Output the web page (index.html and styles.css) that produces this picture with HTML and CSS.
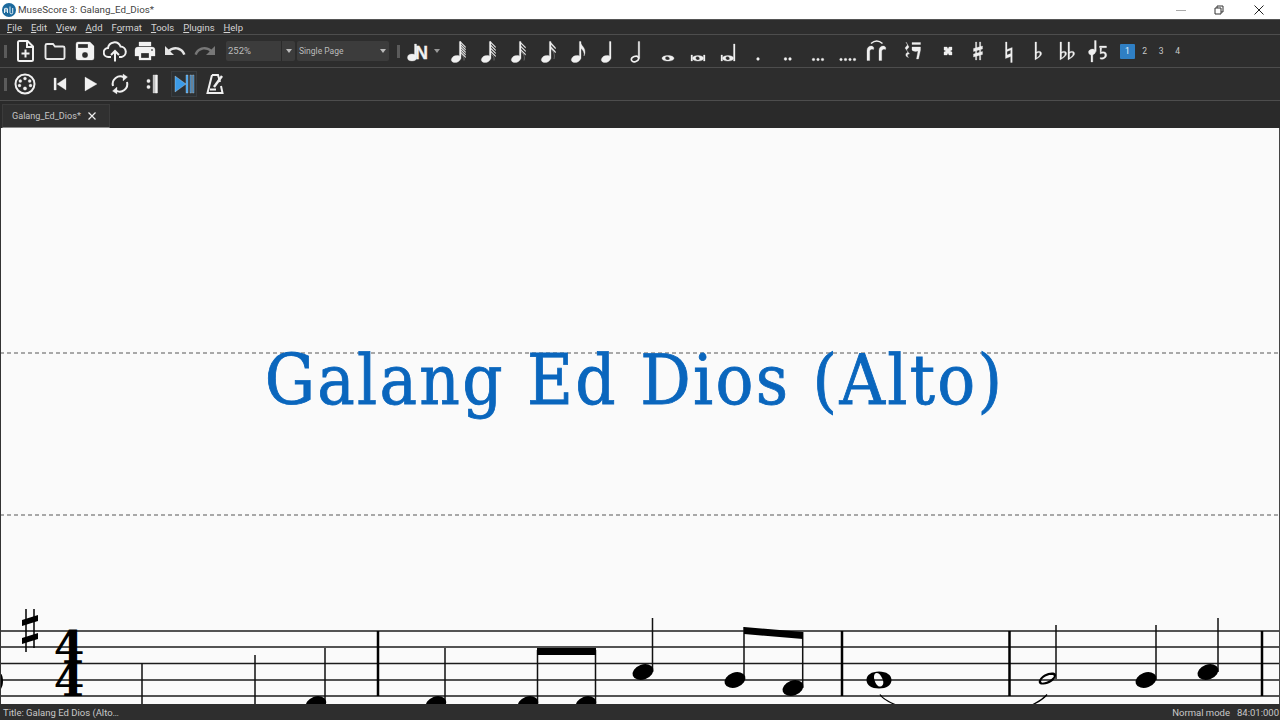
FILE: index.html
```html
<!DOCTYPE html>
<html lang="en">
<head>
    <meta charset="UTF-8">
    <meta name="viewport" content="width=device-width, initial-scale=1.0">
    <title>MuseScore 3: Galang_Ed_Dios*</title>
    <link rel="stylesheet" href="styles.css">
</head>
<body>
    <!-- Icon sprite -->
    <svg class="sprite" xmlns="http://www.w3.org/2000/svg">
        <symbol id="i-new" viewBox="0 0 24 24"><path d="M5 3.500a1.500 1.500 0 0 1 1.500-1.500h8l5.500 5.500v13a1.500 1.500 0 0 1-1.500 1.500h-12a1.500 1.500 0 0 1-1.500-1.500z M14 2v6h6 M12.500 10.500v8 M8.500 14.500h8" fill="none" stroke="#f0f0f0" stroke-width="2"/></symbol>
        <symbol id="i-open" viewBox="0 0 24 24"><path d="M4 5h6l2 2.500h8a1.500 1.500 0 0 1 1.500 1.500v9.500a1.500 1.500 0 0 1-1.500 1.500h-16a1.500 1.500 0 0 1-1.500-1.500v-12a1.500 1.500 0 0 1 1.500-1.500z" fill="none" stroke="#e8e8e8" stroke-width="1.900"/></symbol>
        <symbol id="i-save" viewBox="0 0 24 24"><path d="M17 3H5a2 2 0 0 0-2 2v14a2 2 0 0 0 2 2h14a2 2 0 0 0 2-2V7l-4-4zm-5 16a3 3 0 1 1 0-6 3 3 0 0 1 0 6zm3-10H5V5h10v4z" fill="#f2f2f2"/></symbol>
        <symbol id="i-cloud" viewBox="0 0 24 24"><path d="M8 18h-2.500a4.500 4.500 0 0 1-.5-9 a6.500 6.500 0 0 1 12.500-1.500 a5.300 5.300 0 0 1 1 10.500h-2.500 M12 22.500v-10.500 M8 16l4-4 4 4" fill="none" stroke="#f0f0f0" stroke-width="2"/></symbol>
        <symbol id="i-print" viewBox="0 0 24 24"><path d="M19 8H5a3 3 0 0 0-3 3v6h4v4h12v-4h4v-6a3 3 0 0 0-3-3zm-3 11H8v-5h8v5zm3-7a1 1 0 1 1 0-2 1 1 0 0 1 0 2zm-1-9H6v4h12V3z" fill="#f2f2f2"/></symbol>
        <symbol id="i-undo" viewBox="0 0 24 24"><path d="M12.500 8c-2.650 0-5.050 1-6.900 2.600L2 7v9h9l-3.620-3.620c1.390-1.160 3.160-1.880 5.120-1.880 3.540 0 6.550 2.310 7.600 5.500l2.370-.78C21.080 11.030 17.150 8 12.500 8z"/></symbol>
        <symbol id="i-midi" viewBox="0 0 24 24"><circle cx="12" cy="12" r="9.500" fill="none" stroke="#f0f0f0" stroke-width="2"/><g fill="#f0f0f0"><circle cx="12" cy="6.500" r="1.500"/><circle cx="7.300" cy="9" r="1.500"/><circle cx="16.700" cy="9" r="1.500"/><circle cx="6.500" cy="13.500" r="1.500"/><circle cx="17.500" cy="13.500" r="1.500"/><circle cx="12" cy="16.500" r="1.700"/></g></symbol>
        <symbol id="i-start" viewBox="0 0 24 24"><path d="M6 6h2.200v12H6z M18 6v12l-9-6z" fill="#f0f0f0"/></symbol>
        <symbol id="i-play" viewBox="0 0 24 24"><path d="M7 5v14l12-7z" fill="#f2f2f2"/></symbol>
        <symbol id="i-loop" viewBox="0 0 24 24"><path d="M5 14a7.500 7.500 0 0 1 11-8.500 M19 10a7.500 7.500 0 0 1-11 8.500" fill="none" stroke="#f0f0f0" stroke-width="2"/><path d="M15 2v7l4.500-4z M9 22v-7l-4.500 4z" fill="#f0f0f0"/></symbol>
        <symbol id="i-repeat" viewBox="0 0 24 24"><path d="M14 3h4v18h-4z" fill="#bdbdbd"/><path d="M16.500 3h2v18h-2z" fill="#f4f4f4"/><circle cx="9.500" cy="9" r="1.700" fill="#f0f0f0"/><circle cx="9.500" cy="15" r="1.700" fill="#f0f0f0"/></symbol>
        <symbol id="i-pan" viewBox="0 0 24 24"><path d="M3 4v16l11-8z" fill="#3b9be8"/><path d="M14 3h2v18h-2z" fill="#3b9be8"/><path d="M18 3h1.500v18h-1.500z M20.500 3h1.500v18h-1.500z" fill="#2f78b4"/></symbol>
        <symbol id="i-metro" viewBox="0 0 24 24"><path d="M9 3h6l2 7 M18 14l1.500 7h-15l4.500-18 M7 17.500h6" fill="none" stroke="#f0f0f0" stroke-width="2"/><path d="M11 15l8-11" stroke="#f0f0f0" stroke-width="2.400"/></symbol>

        <symbol id="n-head" viewBox="0 0 24 24"><ellipse cx="10" cy="20" rx="4.800" ry="3.400" transform="rotate(-20 10 20)"/><path d="M13.400 2.500h1.600v17h-1.600z"/></symbol>
        <symbol id="n-128" viewBox="0 0 24 24"><use href="#n-head"/><path d="M14.500 2.500l5 5v1.200l-5-5z M14.500 5l5 5v1.200l-5-5z M14.500 7.500l5 5v1.200l-5-5z M14.500 10l5 5v1.200l-5-5z M14.500 12.500l5 5v1.200l-5-5z"/><path d="M15 15.500c2.500 1.500 3.500 3.500 3 6" fill="none" stroke="#f0f0f0"/></symbol>
        <symbol id="n-64" viewBox="0 0 24 24"><use href="#n-head"/><path d="M14.500 2.500l5 5v1.200l-5-5z M14.500 5.500l5 5v1.200l-5-5z M14.500 8.500l5 5v1.200l-5-5z M14.500 11.500l5 5v1.200l-5-5z"/><path d="M15 15c2.500 1.500 3.500 3.500 3 6.500" fill="none" stroke="#f0f0f0"/></symbol>
        <symbol id="n-32" viewBox="0 0 24 24"><use href="#n-head"/><path d="M14.500 3l5 5v1.200l-5-5z M14.500 6.500l5 5v1.200l-5-5z M14.500 10l5 5v1.200l-5-5z"/><path d="M15 13c3 2 4 5 3 8.500" fill="none" stroke="#f0f0f0"/></symbol>
        <symbol id="n-16" viewBox="0 0 24 24"><use href="#n-head"/><path d="M14.500 3l5 5.500v1.500l-5-5z M14.500 7l5 5.500v1.500l-5-5z"/><path d="M15 10c3 3 4 6 3 10" fill="none" stroke="#f0f0f0"/></symbol>
        <symbol id="n-8" viewBox="0 0 24 24"><use href="#n-head"/><path d="M14.500 3c.5 4 5 5 4.500 11l-1 3c.5-4-1-6-3.500-8z"/></symbol>
        <symbol id="n-half" viewBox="0 0 24 24"><ellipse cx="9" cy="20" rx="3.700" ry="2.600" transform="rotate(-20 9 20)" fill="none" stroke="#f0f0f0" stroke-width="1.600"/><path d="M12.200 2.500h1.500v17h-1.500z"/></symbol>
        <symbol id="n-whole" viewBox="0 0 24 24"><path fill-rule="evenodd" d="M12 16.500c3.600 0 6 1.200 6 2.800s-2.400 2.800-6 2.800-6-1.200-6-2.800 2.400-2.800 6-2.800z M10.500 17.500c-1 .3-1.500 1-1.300 1.900s1.500 1.900 3 1.600 1.700-1.200 1.400-2.100-2-1.700-3.100-1.400z"/></symbol>
        <symbol id="n-breve" viewBox="0 0 24 24"><path d="M5 16h1.500v6h-1.500z M17.500 16h1.500v6h-1.500z"/><path fill-rule="evenodd" d="M12 16.500c3 0 5.500 1 5.500 2.800s-2.500 2.800-5.500 2.800-5.500-1-5.500-2.800 2.500-2.800 5.500-2.800z M11 17.500c-1 .3-1.500 1-1.300 1.900s1.500 1.900 2.600 1.600 1.600-1.200 1.300-2.100-1.600-1.700-2.600-1.400z"/></symbol>
        <symbol id="n-long" viewBox="0 0 24 24"><path d="M5 16h1.500v6h-1.500z M17.500 5h1.500v17h-1.500z"/><path fill-rule="evenodd" d="M12 16.500c3 0 5.500 1 5.500 2.800s-2.500 2.800-5.500 2.800-5.500-1-5.500-2.800 2.500-2.800 5.500-2.800z M11 17.500c-1 .3-1.500 1-1.300 1.900s1.500 1.900 2.600 1.600 1.600-1.200 1.300-2.100-1.600-1.700-2.600-1.400z"/></symbol>
        <symbol id="n-d1" viewBox="0 0 24 24"><circle cx="12" cy="20" r="1.400"/></symbol>
        <symbol id="n-d2" viewBox="0 0 24 24"><circle cx="9.500" cy="20" r="1.400"/><circle cx="14" cy="20" r="1.400"/></symbol>
        <symbol id="n-d3" viewBox="0 0 24 24"><circle cx="7.500" cy="20.500" r="1.300"/><circle cx="12" cy="20.500" r="1.300"/><circle cx="16.500" cy="20.500" r="1.300"/></symbol>
        <symbol id="n-d4" viewBox="0 0 24 24"><circle cx="5" cy="20.500" r="1.300"/><circle cx="9.500" cy="20.500" r="1.300"/><circle cx="14" cy="20.500" r="1.300"/><circle cx="18.500" cy="20.500" r="1.300"/></symbol>
        <symbol id="n-tie" viewBox="0 0 24 24"><path d="M1 21.500v-10c0-3 2-4.500 4-4.500s3.500 1.500 2.500 3.500c-1.500-.8-3.500-.3-3.800 1.500v9.500z M13 21.500v-10c0-3 2-4.500 4-4.500s3.500 1.500 2.500 3.500c-1.500-.8-3.500-.3-3.800 1.500v9.500z"/><path d="M5 4.500c3.500-3 8-3 11.500 0" fill="none" stroke="#f0f0f0" stroke-width="1.500"/></symbol>
        <symbol id="n-rest" viewBox="0 0 24 24"><path d="M7 3l3 5-2.500 3 3 4c-2 0-3 1-1 3.500-3.500-1-3.500-4-.5-5.500l-3-4 2.500-3z M13 3.500h8.500v2h-8.500z M13 8h8.500v3l-2 9h-2l1.500-8c-2 .8-5 .5-6-1z"/></symbol>
        <symbol id="n-x" viewBox="0 0 24 24"><path d="M10 8h3l1 2 1-2h3v3l-2 1 2 1v3h-3l-1-2-1 2h-3v-3l2-1-2-1z"/></symbol>
        <symbol id="n-sharp" viewBox="0 0 24 24"><path d="M9.500 3h1.200v18h-1.200z M13.500 3h1.200v18h-1.200z M7.500 9.500l9-2.500v3l-9 2.500z M7.500 15l9-2.500v3l-9 2.500z"/></symbol>
        <symbol id="n-natural" viewBox="0 0 24 24"><path d="M9.500 3h1.500v7.500l5.200-2v15h-1.500v-6l-5.200 2z M11 12.500v3.500l3.700-1.500v-3.500z" fill-rule="evenodd"/></symbol>
        <symbol id="n-flat" viewBox="0 0 24 24"><path fill-rule="evenodd" d="M9 3h1.600v10c1.500-1.200 5-1.200 5 1.500 0 2.500-3.500 4.500-6.600 6.500z M10.600 14.500v4.500c2-1.200 3.300-2.800 3.300-4.300s-2.300-1.400-3.300-.2z"/></symbol>
        <symbol id="n-dflat" viewBox="0 0 24 24"><path fill-rule="evenodd" d="M4 3h1.600v10c1.500-1.200 5-1.200 5 1.500 0 2.500-3.500 4.500-6.600 6.500z M5.600 14.500v4.500c2-1.200 3.300-2.800 3.300-4.300s-2.300-1.400-3.300-.2z M12 3h1.600v10c1.500-1.200 5-1.200 5 1.500 0 2.500-3.500 4.500-6.600 6.500z M13.600 14.500v4.500c2-1.200 3.300-2.800 3.300-4.300s-2.300-1.400-3.300-.2z"/></symbol>
        <symbol id="n-flip" viewBox="0 0 24 24"><ellipse cx="6" cy="13" rx="3.500" ry="2.800" transform="rotate(-20 6 13)"/><path d="M8.500 1.500h1.700v11h-1.700z M5 15h1.800v8h-1.800z M13.500 7h7v1.700h-7z M14 9h1.700l-.5 4c3-1 5.500 0 5.500 3 0 3-3.500 5-6.500 4v-1.500c2.500.7 4.700-.5 4.700-2.500s-2.500-2.300-4.700-1z"/></symbol>
    </svg>

    <div class="app">
        <!-- Window title -->
        <div class="titlebar">
            <svg class="app-logo" viewBox="0 0 14 14"><circle cx="7" cy="7" r="7" fill="#1c6a9e"/><path d="M2.500 10V6c0-1 1.500-1 1.500 0v3 M4 6c0-1 1.500-1 1.500 0v4 M8 3.500v6a1.300 1.300 0 0 0 2.700 0V5" fill="none" stroke="#fff" stroke-width=".9"/></svg>
            <span class="app-name">MuseScore 3: Galang_Ed_Dios*</span>
            <div class="win-btns">
                <svg class="win-btn win-min" viewBox="0 0 12 12"><path d="M1 6.500h10" stroke="#aaa"/></svg>
                <svg class="win-btn" viewBox="0 0 12 12"><path d="M2 4h6v6h-6z M4 4v-2h6v6h-2" fill="none" stroke="#333"/></svg>
                <svg class="win-btn" viewBox="0 0 12 12"><path d="M1.500 1.500l9 9 M10.500 1.500l-9 9" stroke="#222"/></svg>
            </div>
        </div>

        <!-- Menu -->
        <nav class="menubar">
            <span class="menu-item"><u>F</u>ile</span>
            <span class="menu-item"><u>E</u>dit</span>
            <span class="menu-item"><u>V</u>iew</span>
            <span class="menu-item"><u>A</u>dd</span>
            <span class="menu-item">F<u>o</u>rmat</span>
            <span class="menu-item"><u>T</u>ools</span>
            <span class="menu-item"><u>P</u>lugins</span>
            <span class="menu-item"><u>H</u>elp</span>
        </nav>

        <!-- File and note input toolbar -->
        <div class="toolbar">
            <span class="grip"></span>
            <span class="tool"><svg class="ico"><use href="#i-new"/></svg></span>
            <span class="tool"><svg class="ico"><use href="#i-open"/></svg></span>
            <span class="tool"><svg class="ico"><use href="#i-save"/></svg></span>
            <span class="tool"><svg class="ico"><use href="#i-cloud"/></svg></span>
            <span class="tool"><svg class="ico"><use href="#i-print"/></svg></span>
            <span class="tool"><svg class="ico ico-bright"><use href="#i-undo"/></svg></span>
            <span class="tool"><svg class="ico ico-dim ico-flip"><use href="#i-undo"/></svg></span>
            <div class="combo combo-zoom"><span class="combo-val">252%</span><span class="combo-arrow"></span></div>
            <div class="combo combo-view"><span class="combo-val">Single Page</span><span class="combo-arrow"></span></div>
            <span class="grip grip-mid"></span>
            <span class="tool"><svg class="ico ico-n" viewBox="0 0 24 24"><ellipse cx="7" cy="18.500" rx="4.500" ry="3.500"/><path d="M9.500 5h2v13h-2z"/><text x="10" y="19.500" class="n-letter">N</text></svg></span>
            <span class="drop-arrow"></span>
            <span class="tool"><svg class="ico"><use href="#n-128"/></svg></span>
            <span class="tool"><svg class="ico"><use href="#n-64"/></svg></span>
            <span class="tool"><svg class="ico"><use href="#n-32"/></svg></span>
            <span class="tool"><svg class="ico"><use href="#n-16"/></svg></span>
            <span class="tool"><svg class="ico"><use href="#n-8"/></svg></span>
            <span class="tool"><svg class="ico"><use href="#n-head"/></svg></span>
            <span class="tool"><svg class="ico"><use href="#n-half"/></svg></span>
            <span class="tool"><svg class="ico"><use href="#n-whole"/></svg></span>
            <span class="tool"><svg class="ico"><use href="#n-breve"/></svg></span>
            <span class="tool"><svg class="ico"><use href="#n-long"/></svg></span>
            <span class="tool"><svg class="ico"><use href="#n-d1"/></svg></span>
            <span class="tool"><svg class="ico"><use href="#n-d2"/></svg></span>
            <span class="tool"><svg class="ico"><use href="#n-d3"/></svg></span>
            <span class="tool"><svg class="ico"><use href="#n-d4"/></svg></span>
            <span class="tool"><svg class="ico"><use href="#n-tie"/></svg></span>
            <span class="tool tool-wide"><svg class="ico"><use href="#n-rest"/></svg></span>
            <span class="tool tool-wide"><svg class="ico"><use href="#n-x"/></svg></span>
            <span class="tool"><svg class="ico"><use href="#n-sharp"/></svg></span>
            <span class="tool"><svg class="ico"><use href="#n-natural"/></svg></span>
            <span class="tool"><svg class="ico"><use href="#n-flat"/></svg></span>
            <span class="tool"><svg class="ico"><use href="#n-dflat"/></svg></span>
            <span class="tool"><svg class="ico"><use href="#n-flip"/></svg></span>
            <span class="voice voice-on">1</span>
            <span class="voice">2</span>
            <span class="voice">3</span>
            <span class="voice">4</span>
        </div>

        <!-- Playback toolbar -->
        <div class="toolbar">
            <span class="grip"></span>
            <span class="tool"><svg class="ico"><use href="#i-midi"/></svg></span>
            <span class="tool tool-start"><svg class="ico"><use href="#i-start"/></svg></span>
            <span class="tool"><svg class="ico"><use href="#i-play"/></svg></span>
            <span class="tool"><svg class="ico"><use href="#i-loop"/></svg></span>
            <span class="tool tool-repeat"><svg class="ico"><use href="#i-repeat"/></svg></span>
            <span class="tool tool-pan"><svg class="ico"><use href="#i-pan"/></svg></span>
            <span class="tool tool-metro"><svg class="ico"><use href="#i-metro"/></svg></span>
        </div>

        <!-- Tabs -->
        <div class="tabbar">
            <div class="tab">
                <span class="tab-name">Galang_Ed_Dios*</span>
                <svg class="tab-close" viewBox="0 0 10 10"><path d="M1.500 1.500l7 7 M8.500 1.500l-7 7" stroke="#eee" stroke-width="1.200"/></svg>
            </div>
        </div>

        <!-- Score -->
        <main class="score">
            <div class="title-frame">
                <h1 class="score-title">Galang Ed Dios (Alto)</h1>
            </div>
            <svg class="staff" viewBox="0 600 1280 104" xmlns="http://www.w3.org/2000/svg">
                <g class="staff-lines">
                    <path d="M1 631h1278 M1 647h1278 M1 663.500h1278 M1 680h1278 M1 696h1278"/>
                </g>
                <g class="bars">
                    <path d="M378 631v65 M842 631v65 M1009.500 631v65 M1262 631v65"/>
                </g>
                <g class="stems">
                    <path d="M142 663v41 M255 655v49 M325 648v56 M445 648v56 M537.500 650v54 M595.500 650v54 M652.500 618v54 M744 627v53 M802.700 632v56 M1056 625v54 M1156 625v55 M1218 618v54"/>
                </g>
                <path d="M0 672c4 4 4 14 0 18z"/>
                <path d="M26 609v43 M34 609v39" stroke="#000" stroke-width="1.500"/>
                <path d="M22 620l16-5v6l-16 5z M22 638l16-5v6l-16 5z"/>
                <text x="69" y="663" class="time-sig">4</text>
                <text x="69" y="696" class="time-sig">4</text>
                <path d="M537 648h59v7h-59z M744 627l59 5v7l-59-5z"/>
                <ellipse cx="316" cy="704" rx="10.500" ry="7.500" transform="rotate(-20 316 704)"/>
                <ellipse cx="436" cy="704" rx="10.500" ry="7.500" transform="rotate(-20 436 704)"/>
                <ellipse cx="528" cy="704" rx="10.500" ry="7.500" transform="rotate(-20 528 704)"/>
                <ellipse cx="586" cy="704" rx="10.500" ry="7.500" transform="rotate(-20 586 704)"/>
                <ellipse cx="643" cy="672" rx="10.800" ry="7.500" transform="rotate(-20 643 672)"/>
                <ellipse cx="735" cy="680" rx="10.800" ry="7.500" transform="rotate(-20 735 680)"/>
                <ellipse cx="793" cy="688" rx="10.800" ry="7.500" transform="rotate(-20 793 688)"/>
                <ellipse cx="1146" cy="680" rx="10.800" ry="7.500" transform="rotate(-20 1146 680)"/>
                <ellipse cx="1208" cy="672" rx="10.800" ry="7.500" transform="rotate(-20 1208 672)"/>
                <path fill-rule="evenodd" d="M879 671.500c7.500 0 12.500 3.500 12.500 8.500s-5 8.500-12.500 8.500-12.500-3.500-12.500-8.500 5-8.500 12.500-8.500z M876.500 673c-2.500.5-3 3.500-2 7s3 7 6 6.500 3.500-4 2-7.500-3.500-6.500-6-6z"/>
                <path fill-rule="evenodd" d="M1052 672.500c3.500 0 5 2 3.500 4.500-1.500 4-6 7-12 7.500-4 .5-6-2-4-5 2-4 7.500-7 12.500-7z M1051.500 675c-3.500-.5-8 2-10 5-1 2 0 3 2.500 2.500 3.500-.5 7.500-3 9.500-5.500 1-1.500 0-2-2-2z"/>
                <path d="M880 694.500c3 5 9 7.500 15 10 M1047 694.500c-3 4-8 7-14 10" fill="none" stroke="#000" stroke-width="1.300"/>
            </svg>
        </main>

        <!-- Status bar -->
        <footer class="statusbar">
            <span>Title: Galang Ed Dios (Alto…</span>
            <span class="status-right"><span>Normal mode</span><span>84:01:000</span></span>
        </footer>
    </div>
</body>
</html>
```
FILE: styles.css
```css
* {
    box-sizing: border-box;
}
html, body {
    margin: 0;
    height: 100%;
    overflow: hidden;
}
body {
    font-family: Roboto, "Open Sans", sans-serif;
    background-color: #2d2d2d;
    color: #ddd;
}
.sprite {
    display: none;
}
.app {
    display: flex;
    flex-direction: column;
    height: 720px;
}

/* Title bar */
.titlebar {
    display: flex;
    align-items: center;
    height: 19px;
    padding-left: 2px;
    background-color: #fff;
    color: #444;
    font-size: 9.800px;
}
.app-logo {
    width: 14px;
    height: 14px;
}
.app-name {
    margin-left: 2px;
}
.win-btns {
    display: flex;
    margin-left: auto;
    padding-right: 15px;
    gap: 28px;
}
.win-btn {
    width: 12px;
    height: 12px;
}
.win-min {
    margin-right: -2px;
}

/* Menu */
.menubar {
    display: flex;
    align-items: center;
    gap: 9px;
    height: 15px;
    padding-left: 7px;
    font-size: 9.500px;
    color: #d4d4d4;
    border-top: 1px solid #555;
}
.menu-item u {
    text-underline-offset: 1px;
}

/* Toolbars */
.toolbar {
    display: flex;
    align-items: center;
    height: 33px;
    border-top: 1px solid #4d4d4d;
}
.grip {
    width: 10px;
    height: 13px;
    background: radial-gradient(circle, #5c5c5c 0.7px, transparent 1px) center top / 2px 2px repeat;
    background-clip: content-box;
    padding: 0 3.500px;
}
.grip-mid {
    width: 8px;
    margin: 0 0 0 5px;
    padding: 0 2.500px;
}
.tool {
    display: flex;
    align-items: center;
    justify-content: center;
    width: 30px;
    height: 30px;
    flex: none;
}
.tool-wide {
    width: 35px;
}
.ico {
    width: 24px;
    height: 24px;
    fill: #f0f0f0;
    stroke: #f0f0f0;
    stroke-width: 0.300;
}
.ico-bright {
    fill: #e4e4e4;
    stroke: none;
}
.ico-dim {
    fill: #777;
    stroke: none;
}
.ico-flip {
    transform: scaleX(-1);
}
.n-letter {
    font-family: "Liberation Sans", sans-serif;
    font-weight: bold;
    font-size: 18px;
}
.drop-arrow {
    width: 0;
    height: 0;
    margin: 0 3px 0 2px;
    border-left: 3.500px solid transparent;
    border-right: 3.500px solid transparent;
    border-top: 4px solid #999;
}

/* Combo boxes */
.combo {
    display: flex;
    align-items: center;
    height: 20px;
    margin-left: 6px;
    background-color: #3c3c3c;
    border-radius: 2px;
    font-size: 9.500px;
    color: #bbb;
}
.combo-zoom {
    width: 69px;
}
.combo-view {
    width: 92px;
    margin-left: 2px;
    font-size: 8.500px;
}
.combo-val {
    flex: 1;
    padding-left: 2px;
}
.combo-zoom .combo-val {
    height: 100%;
    line-height: 20px;
    border-right: 1px solid #2a2a2a;
}
.combo-arrow {
    width: 0;
    height: 0;
    margin: 0 3.500px;
    border-left: 3px solid transparent;
    border-right: 3px solid transparent;
    border-top: 4px solid #bbb;
}

/* Voices */
.voice {
    width: 16.500px;
    height: 15px;
    font-size: 8.500px;
    line-height: 15px;
    text-align: center;
    color: #c8c8c8;
}
.voice-on {
    width: 15px;
    margin: 0 1.500px 0 7px;
    background-color: #2f7fc4;
    border-radius: 1px;
    color: #e8f2fb;
}

/* Playback icons */
.tool-start {
    margin-left: 5px;
}
.tool-repeat {
    margin-left: 1px;
}
.tool-pan {
    width: 26px;
    height: 26px;
    margin-left: 5px;
    background-color: #2c3033;
    border: 1px solid #3a3d40;
}
.tool-metro {
    margin-left: 3px;
}

/* Tabs */
.tabbar {
    display: flex;
    align-items: flex-end;
    height: 28px;
    padding: 3px 0 0 2px;
    border-top: 1px solid #4d4d4d;
    background-color: #2a2a2a;
}
.tab {
    display: flex;
    align-items: center;
    width: 108px;
    height: 24px;
    padding-left: 9px;
    background-color: #303030;
    border: 1px solid #3b3b3b;
    border-bottom: 1px solid #8a8a8a;
    font-size: 9.100px;
    color: #c4c4c4;
}
.tab-close {
    width: 10px;
    height: 10px;
    margin-left: 6px;
}

/* Score page */
.score {
    flex: 1;
    display: flex;
    flex-direction: column;
    background-color: #fafafa;
    border-left: 1px solid #333;
    border-right: 1px solid #444;
    overflow: hidden;
}
.title-frame {
    display: flex;
    align-items: flex-start;
    justify-content: center;
    height: 164px;
    margin: 224px -1px 0;
    padding-right: 11px;
    background:
        repeating-linear-gradient(90deg, #a8a8a8 0 4px, transparent 4px 7px) top / 100% 2px no-repeat,
        repeating-linear-gradient(90deg, #a8a8a8 0 4px, transparent 4px 7px) bottom / 100% 2px no-repeat;
}
.score-title {
    margin: -7px 0 0;
    font-family: "DejaVu Serif Condensed", "DejaVu Serif", serif;
    font-stretch: condensed;
    font-size: 70px;
    line-height: 1;
    letter-spacing: 2.300px;
    font-weight: normal;
    color: #0a66bd;
    white-space: nowrap;
    -webkit-text-stroke: 0.8px #0a66bd;
}
.staff {
    display: block;
    flex: none;
    width: 1280px;
    height: 104px;
    margin: auto 0 0 -1px;
}
.staff-lines path {
    fill: none;
    stroke: #1c1c1c;
    stroke-width: 1.300;
}
.bars path {
    fill: none;
    stroke: #000;
    stroke-width: 2.500;
}
.stems path {
    fill: none;
    stroke: #111;
    stroke-width: 1.500;
}
.time-sig {
    font-family: "DejaVu Serif", serif;
    font-weight: bold;
    font-size: 44px;
    text-anchor: middle;
}

/* Status bar */
.statusbar {
    display: flex;
    align-items: center;
    justify-content: space-between;
    height: 16px;
    padding: 0 1px 0 3px;
    background-color: #2e2e2e;
    font-size: 9.500px;
    color: #c8c8c8;
}
.status-right {
    display: flex;
    gap: 7px;
}
```
